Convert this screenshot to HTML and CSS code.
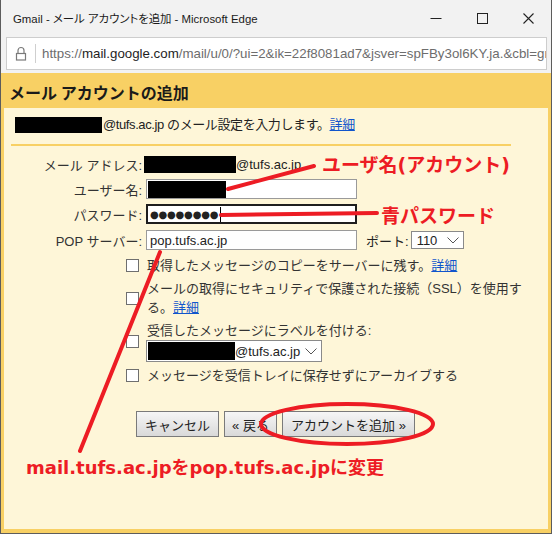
FILE: index.html
```html
<!DOCTYPE html>
<html lang="ja">
<head>
<meta charset="utf-8">
<title>Gmail - メール アカウントを追加</title>
<link rel="stylesheet" href="styles.css">
</head>
<body>
<div class="window">
  <div class="titlebar">
    <span class="title">Gmail - メール アカウントを追加 - Microsoft Edge</span>
    <div class="controls">
      <span class="ctl"><svg width="12" height="12" viewBox="0 0 12 12"><path d="M0.5 6.5h11" stroke="#222" stroke-width="1"/></svg></span>
      <span class="ctl"><svg width="11" height="11" viewBox="0 0 11 11"><rect x="0.5" y="0.5" width="10" height="10" fill="none" stroke="#222" stroke-width="1"/></svg></span>
      <span class="ctl"><svg width="11" height="11" viewBox="0 0 11 11"><path d="M0.5 0.5l10 10M10.5 0.5l-10 10" stroke="#222" stroke-width="1.1"/></svg></span>
    </div>
  </div>
  <div class="addrbar">
    <div class="addrbox">
      <span class="lock"><svg width="12" height="15" viewBox="0 0 12 15"><path d="M3 7V4.5a3 3 0 0 1 6 0V7" fill="none" stroke="#7a7a7a" stroke-width="1.2"/><rect x="1.5" y="7.5" width="9" height="6.5" fill="none" stroke="#7a7a7a" stroke-width="1.2"/></svg></span>
      <span class="sep"></span>
      <span class="url">https://<b>mail.google.com</b>/mail/u/0/?ui=2&amp;ik=22f8081ad7&amp;jsver=spFBy3ol6KY.ja.&amp;cbl=gmail_fe_180121.13_p1</span>
    </div>
  </div>
  <div class="dialog">
    <div class="dlg-head">メール アカウントの追加</div>
    <div class="panel">
      <div class="intro"><span class="redact r-intro"></span>@tufs.ac.jp のメール設定を入力します。<a class="link">詳細</a></div>
      <div class="rule"></div>
      <div class="form">
        <div class="row"><span class="lbl">メール アドレス:</span><span class="val"><span class="redact r-addr"></span>@tufs.ac.jp</span></div>
        <div class="row"><span class="lbl">ユーザー名:</span><span class="val"><span class="input"><span class="redact r-user"></span></span></span></div>
        <div class="row"><span class="lbl">パスワード:</span><span class="val"><span class="input focus"><span class="dots">●●●●●●●●</span><span class="caret"></span></span></span></div>
        <div class="row pop"><span class="lbl">POP サーバー:</span><span class="val"><span class="input">pop.tufs.ac.jp</span><span class="port-lbl">ポート:</span><span class="select port">110<svg class="chev" width="12" height="7" viewBox="0 0 12 7"><path d="M0.5 0.5l5.5 5.5 5.5-5.5" fill="none" stroke="#555" stroke-width="1"/></svg></span></span></div>
      </div>
      <div class="checks">
        <div class="check"><span class="box"></span><span class="ctext">取得したメッセージのコピーをサーバーに残す。<a class="link">詳細</a></span></div>
        <div class="check"><span class="box"></span><span class="ctext wrap">メールの取得にセキュリティで保護された接続（SSL）を使用する。<a class="link">詳細</a></span></div>
        <div class="check"><span class="box"></span><span class="ctext"><span class="line">受信したメッセージにラベルを付ける:</span><span class="select labelsel"><span class="redact r-label"></span>@tufs.ac.jp<svg class="chev" width="12" height="7" viewBox="0 0 12 7"><path d="M0.5 0.5l5.5 5.5 5.5-5.5" fill="none" stroke="#555" stroke-width="1"/></svg></span></span></div>
        <div class="check"><span class="box"></span><span class="ctext">メッセージを受信トレイに保存せずにアーカイブする</span></div>
      </div>
      <div class="buttons">
        <span class="btn b-cancel">キャンセル</span>
        <span class="btn b-back">« 戻る</span>
        <span class="btn b-add">アカウントを追加 »</span>
      </div>
    </div>
  </div>

  <svg class="overlay" width="552" height="534" viewBox="0 0 552 534">
    <g stroke="#ed1c24" stroke-width="4" stroke-linecap="round" fill="none">
      <path d="M228 189L314 166"/>
      <path d="M221 215L377 213"/>
      <path d="M160 252L80 451"/>
      <ellipse cx="347" cy="424" rx="86" ry="20"/>
    </g>
  </svg>
  <span class="note n-user">ユーザ名(アカウント)</span>
  <span class="note n-pass">青パスワード</span>
  <span class="note n-pop">mail.tufs.ac.jpをpop.tufs.ac.jpに変更</span>
</div>
</body>
</html>
```

FILE: styles.css
```css
* { box-sizing: border-box; }
body {
  margin: 0;
  background: #ffffff;
  font-family: "Liberation Sans", "Noto Sans CJK JP", sans-serif;
}
.window {
  position: relative;
  width: 552px;
  height: 534px;
  border: 1px solid #5c5c5c;
  border-top: none;
  background: #f2f2f2;
  display: flex;
  flex-direction: column;
  overflow: hidden;
}
.titlebar {
  height: 36px;
  flex: none;
  display: flex;
  align-items: center;
  padding-left: 12px;
}
.title {
  font-family: "Liberation Sans", "Noto Sans CJK JP", sans-serif;
  font-size: 11.4px;
  font-feature-settings: "palt";
  color: #1a1a1a;
}
.controls {
  margin-left: auto;
  display: flex;
  height: 100%;
}
.ctl {
  width: 46px;
  height: 36px;
  display: flex;
  align-items: center;
  justify-content: center;
}
.addrbar {
  height: 37px;
  flex: none;
  padding: 1px 4px 0 5px;
}
.addrbox {
  height: 33px;
  background: #ffffff;
  border: 1px solid #cdcdcd;
  display: flex;
  align-items: center;
}
.lock {
  flex: none;
  width: 28px;
  display: flex;
  justify-content: center;
}
.sep {
  flex: none;
  width: 1px;
  height: 19px;
  background: #cfcfcf;
}
.url {
  flex: 1;
  min-width: 0;
  padding-left: 6px;
  font-size: 13.3px;
  color: #6d6d6d;
  white-space: nowrap;
  overflow: hidden;
}
.url b {
  font-weight: normal;
  color: #1e1e1e;
}
.dialog {
  flex: 1;
  background: #f8d064;
  padding: 0 3px 4px 3px;
  display: flex;
  flex-direction: column;
}
.dlg-head {
  height: 35px;
  padding: 3px 0 0 5px;
  line-height: 32px;
  font-size: 16px;
  font-weight: bold;
  color: #1a1a1a;
  font-family: "Noto Sans CJK JP", sans-serif;
}
.panel {
  flex: 1;
  background: #fef6d8;
  padding-top: 8px;
  font-size: 13px;
  color: #222222;
}
.intro {
  padding-left: 11px;
  line-height: 18px;
  height: 18px;
  display: flex;
  align-items: center;
  letter-spacing: -0.4px;
}
.redact {
  display: inline-block;
  background: #000000;
  flex: none;
}
.r-intro { width: 87px; height: 16px; margin-right: 1px; }
.r-addr { width: 92px; height: 17px; }
.r-user { width: 78px; height: 17px; }
.r-label { width: 87px; height: 18px; }
.link {
  color: #1155cc;
  text-decoration: underline;
}
.rule {
  margin: 10px 0 0 7px;
  width: 500px;
  height: 2px;
  background: #f8d064;
}
.form {
  margin-top: 8px;
  display: flex;
  flex-direction: column;
  gap: 5px;
}
.row {
  display: grid;
  grid-template-columns: 140px auto;
  height: 20px;
  align-items: center;
}
.row.pop { margin-top: 1px; }
.lbl {
  text-align: right;
  padding-right: 2px;
  color: #333333;
  white-space: nowrap;
}
.val {
  display: flex;
  align-items: center;
}
.input {
  margin-left: 2px;
  width: 211px;
  height: 20px;
  background: #ffffff;
  border: 1px solid #9a9a9a;
  display: flex;
  align-items: center;
  padding-left: 3px;
  color: #222;
}
.input .r-user { margin-left: -2px; }
.input.focus {
  border: 2px solid #1e1e1e;
  padding-left: 2px;
}
.dots {
  font-family: "DejaVu Sans", sans-serif;
  font-size: 10px;
  letter-spacing: -0.2px;
  color: #222;
}
.caret {
  width: 1px;
  height: 15px;
  background: #000;
  margin-left: 2px;
}
.port-lbl {
  margin-left: 9px;
}
.select {
  background: #ffffff;
  border: 1px solid #8a8a8a;
  display: flex;
  align-items: center;
  color: #222;
}
.port {
  margin-left: 2px;
  width: 53px;
  height: 18px;
  padding-left: 5px;
}
.chev { margin-left: auto; margin-right: 4px; }
.checks {
  margin-top: 6px;
  display: flex;
  flex-direction: column;
  gap: 4px;
}
.check {
  display: flex;
  align-items: center;
  padding-left: 122px;
  gap: 8px;
}
.box {
  width: 13px;
  height: 13px;
  background: #ffffff;
  border: 1px solid #6f6f6f;
  flex: none;
}
.ctext {
  line-height: 19px;
  color: #333333;
}
.ctext.wrap { max-width: 378px; }
.line { display: block; }
.labelsel {
  margin-left: -1px;
  width: 176px;
  height: 22px;
  padding-left: 1px;
}
.buttons {
  margin-top: 26px;
  padding-left: 132px;
  display: flex;
  gap: 5px;
}
.btn {
  height: 26px;
  border: 1px solid #7a7a7a;
  background: linear-gradient(#f6f6f6, #d9d9d9);
  display: flex;
  align-items: center;
  justify-content: center;
  font-size: 13px;
  color: #222;
  white-space: nowrap;
}
.b-cancel { width: 83px; }
.b-back { width: 53px; }
.b-add { width: 133px; }
.overlay {
  position: absolute;
  left: -1px;
  top: 0;
  pointer-events: none;
}
.note {
  position: absolute;
  color: #ed1c24;
  font-weight: bold;
  font-size: 18px;
  line-height: 22px;
  font-family: "DejaVu Sans", "Noto Sans CJK JP", sans-serif;
  white-space: nowrap;
}
.n-user { left: 321px; top: 154px; font-size: 19px; }
.n-pass { left: 380px; top: 205px; font-size: 19px; }
.n-pop { left: 25px; top: 457px; }
```
